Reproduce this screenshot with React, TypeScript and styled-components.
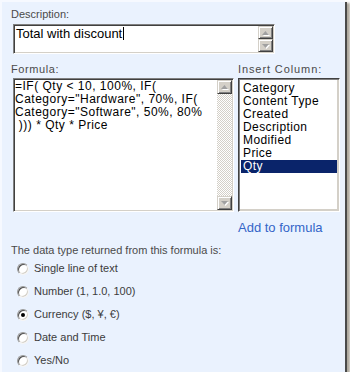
import React from 'react';
import styled, { createGlobalStyle } from 'styled-components';

const columns = ['Category', 'Content Type', 'Created', 'Description', 'Modified', 'Price', 'Qty'];

const formulaLines = [
  '=IF( Qty < 10, 100%, IF(',
  'Category="Hardware", 70%, IF(',
  'Category="Software", 50%, 80%',
  ' ))) * Qty * Price',
];

const returnTypes = [
  'Single line of text',
  'Number (1, 1.0, 100)',
  'Currency ($, ¥, €)',
  'Date and Time',
  'Yes/No',
];

const Arrow = ({ down }: { down?: boolean }) => (
  <svg width="9" height="6" viewBox="0 0 9 6">
    <polygon points={down ? '1,1 8,1 4.5,5' : '1,5 8,5 4.5,1'} fill="#fff" transform="translate(1 1)" />
    <polygon points={down ? '1,1 8,1 4.5,5' : '1,5 8,5 4.5,1'} fill="#a0a0a0" />
  </svg>
);

export default function App() {
  return (
    <>
      <GlobalStyle />
      <Panel>
        <Label>Description:</Label>
        <DescBox>
          <DescText>
            Total with discount
            <Caret />
          </DescText>
          <ScrollCol>
            <ScrollButton $h={13}>
              <Arrow />
            </ScrollButton>
            <ScrollButton $h={13}>
              <Arrow down />
            </ScrollButton>
          </ScrollCol>
        </DescBox>

        <FormulaGrid>
          <Label $spacing={0.6}>Formula:</Label>
          <Label $spacing={0.9}>Insert Column:</Label>
          <FormulaBox>
            <FormulaText>{formulaLines.join('\n')}</FormulaText>
            <Track>
              <ScrollButton $h={14}>
                <Arrow />
              </ScrollButton>
              <ScrollButton $h={14}>
                <Arrow down />
              </ScrollButton>
            </Track>
          </FormulaBox>
          <ListBox>
            {columns.map(c => (
              <ListItem key={c} $selected={c === 'Qty'}>
                {c}
              </ListItem>
            ))}
          </ListBox>
          <span />
          <AddLink href="#">Add to formula</AddLink>
        </FormulaGrid>

        <TypeLabel>The data type returned from this formula is:</TypeLabel>
        <RadioList>
          {returnTypes.map(t => (
            <RadioRow key={t}>
              <Radio $checked={t.startsWith('Currency')} />
              <RadioText>{t}</RadioText>
            </RadioRow>
          ))}
        </RadioList>
      </Panel>
    </>
  );
}

const GlobalStyle = createGlobalStyle`
  body {
    margin: 0;
    background: #fff;
    font-family: "Liberation Sans", Arial, sans-serif;
  }
`;

const Panel = styled.div`
  box-sizing: border-box;
  width: 345px;
  height: 372px;
  padding: 6px 0 0 9px;
  background: #eaf2fe;
  border-top: 2px solid #f6f9ff;
  border-left: 2px solid #f6f9ff;
  box-shadow: 2px 2px 0 #4a4a4a, 4px 4px 2px 1px rgba(110, 100, 80, 0.55);
`;

const Label = styled.div<{ $spacing?: number }>`
  font-size: 11px;
  line-height: 13px;
  color: #4a4a4a;
  letter-spacing: ${p => p.$spacing || 0}px;
`;

const inset = `
  box-sizing: border-box;
  background: #fff;
  border: 1px solid;
  border-color: #808080 #fff #fff #808080;
  box-shadow: inset 1px 1px 0 #404040, inset -1px -1px 0 #d4d0c8;
`;

const DescBox = styled.div`
  ${inset}
  display: flex;
  width: 262px;
  height: 30px;
  margin: 3px 0 0 2px;
`;

const DescText = styled.div`
  flex: 1;
  padding: 1px 0 0 2px;
  font-size: 13px;
  line-height: 15px;
  color: #000;
`;

const Caret = styled.span`
  display: inline-block;
  width: 1px;
  height: 13px;
  margin-left: 1px;
  background: #000;
  vertical-align: -2px;
`;

const ScrollCol = styled.div`
  display: flex;
  flex-direction: column;
  justify-content: space-between;
  width: 15px;
  padding: 1px 1px 1px 0;
`;

const ScrollButton = styled.div<{ $h: number }>`
  box-sizing: border-box;
  height: ${p => p.$h}px;
  display: flex;
  align-items: center;
  justify-content: center;
  background: #d4d0c8;
  border: 1px solid;
  border-color: #d4d0c8 #404040 #404040 #d4d0c8;
  box-shadow: inset 1px 1px 0 #fff, inset -1px -1px 0 #808080;
`;

const FormulaGrid = styled.div`
  display: grid;
  grid-template-columns: 223px 102px;
  column-gap: 4px;
  row-gap: 2px;
  margin-top: 9px;
`;

const FormulaBox = styled.div`
  ${inset}
  display: flex;
  width: 221px;
  height: 134px;
  margin-left: 2px;
`;

const FormulaText = styled.div`
  flex: 1;
  padding: 1px 0 0 1px;
  font-size: 12px;
  line-height: 13px;
  letter-spacing: 0.5px;
  white-space: pre;
  overflow: hidden;
  color: #000;
`;

const Track = styled.div`
  display: flex;
  flex-direction: column;
  justify-content: space-between;
  width: 15px;
  margin: 1px 1px 1px 0;
  background: conic-gradient(#d4d0c8 25%, #fff 0 50%, #d4d0c8 0 75%, #fff 0) 0 0 / 2px 2px;
`;

const ListBox = styled.div`
  ${inset}
  border-color: #404040 #fff #fff #404040;
  box-shadow: inset 1px 1px 0 #808080, inset -1px -1px 0 #d4d0c8, inset -2px -2px 0 #d4d0c8;
  height: 134px;
  padding: 3px 2px 0 2px;
`;

const ListItem = styled.div<{ $selected?: boolean }>`
  padding-left: 2px;
  font-size: 12px;
  line-height: 13px;
  letter-spacing: 0.4px;
  color: ${p => (p.$selected ? '#fff' : '#000')};
  background: ${p => (p.$selected ? '#0a246a' : 'transparent')};
`;

const AddLink = styled.a`
  margin-top: 6px;
  font-size: 13px;
  line-height: 15px;
  color: #3465c8;
  text-decoration: none;
`;

const TypeLabel = styled(Label)`
  margin-top: 9px;
`;

const RadioList = styled.div`
  display: flex;
  flex-direction: column;
`;

const RadioRow = styled.label`
  display: flex;
  align-items: center;
  height: 23px;
  padding-left: 6px;
  gap: 5px;
`;

const Radio = styled.span<{ $checked?: boolean }>`
  position: relative;
  box-sizing: border-box;
  width: 12px;
  height: 12px;
  border-radius: 50%;
  background: #fff;
  border: 1px solid;
  border-color: #9a9a9a #f4f4f4 #f4f4f4 #9a9a9a;
  box-shadow: inset 1px 1px 0 #505050, inset -1px -1px 0 #d4d0c8;
  &::after {
    content: '';
    display: ${p => (p.$checked ? 'block' : 'none')};
    position: absolute;
    left: 3px;
    top: 3px;
    width: 4px;
    height: 4px;
    border-radius: 50%;
    background: #000;
  }
`;

const RadioText = styled.span`
  font-size: 11px;
  line-height: 13px;
  color: #3c3c3c;
`;
